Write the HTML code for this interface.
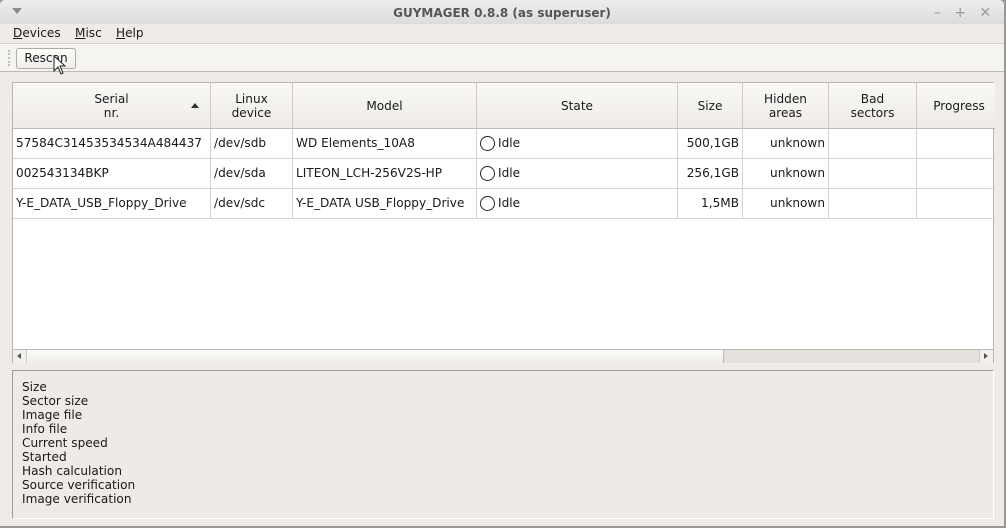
<!DOCTYPE html>
<html><head><meta charset="utf-8"><style>
*{box-sizing:border-box;margin:0;padding:0}
body{width:1006px;height:528px;overflow:hidden;background:#9a9895;font-family:"DejaVu Sans","Liberation Sans",sans-serif;font-size:12.1px;color:#1a1a1a;position:relative}
.a{position:absolute}
.win{left:0;top:0;width:1004px;height:526px;background:#efebe7;border-radius:5px 5px 0 0;overflow:hidden}
.title{left:0;top:0;width:1004px;height:24px;background:linear-gradient(#eeeeee,#dcdcdc);text-align:center;line-height:26px;font-weight:bold;color:#555;font-size:12px}
.menu{top:24px;left:0;width:1004px;height:20px;background:#efebe7;border-bottom:1px solid #d8d4d0}
.tool{top:44px;left:0;width:1004px;height:28px;background:#f6f4f1;border-bottom:1px solid #bdb9b5}
.tbl{left:12px;top:82px;width:982px;height:281px;background:#fff;border:1px solid #b8b4b0}
.hd{top:0;height:46px;background:linear-gradient(#f9f8f6,#efece8);border-right:1px solid #cfcbc7;border-bottom:1px solid #bdb9b5;text-align:center;display:flex;align-items:center;justify-content:center;line-height:14px}
.c{height:30px;border-right:1px solid #d6d3cf;border-bottom:1px solid #d6d3cf;line-height:28px;padding:0 3px;white-space:nowrap;overflow:hidden}
.r{text-align:right}
.info{left:12px;top:370px;width:982px;height:149px;border-top:1px solid #a09c98;border-left:1px solid #a09c98;border-right:1px solid #fff;border-bottom:1px solid #fff;background:#eeebe7;padding:9px 0 0 9px;line-height:14px}
.circ{display:inline-block;width:15px;height:15px;border:1px solid #222;border-radius:50%;vertical-align:-4px;margin-right:3px}
</style></head><body>
<div class="a win">
<div class="a title">GUYMAGER 0.8.8 (as superuser)</div>
<div class="a" style="left:12px;top:8px;width:0;height:0;border-left:5px solid transparent;border-right:5px solid transparent;border-top:6px solid #8a8a8a"></div>
<div class="a" style="left:934px;top:2px;color:#999;font-size:14px;line-height:22px">–&nbsp;&nbsp;&nbsp;+&nbsp;&nbsp;&nbsp;✕</div>
<div class="a menu"><span class="a" style="left:13px;top:2px"><u>D</u>evices</span><span class="a" style="left:75px;top:2px"><u>M</u>isc</span><span class="a" style="left:116px;top:2px"><u>H</u>elp</span></div>
<div class="a tool">
<div class="a" style="left:8px;top:6px;width:2px;height:16px;border-left:2px dotted #c0bcb8"></div>
<div class="a" style="left:16px;top:4px;width:60px;height:21px;border:1px solid #b0aca8;border-radius:3px;background:linear-gradient(#fdfdfc,#f0eeeb);text-align:center;line-height:19px">Rescan</div>
<svg class="a" style="left:53px;top:11px" width="14" height="22"><path d="M1 1 L1 16 L5 12 L8 19 L10 18 L7 11 L12 11 Z" fill="#fff" stroke="#222" stroke-width="1"/></svg>
</div>
<div class="a tbl">
<div class="a hd" style="left:0;width:198px">Serial<br>nr.</div>
<div class="a" style="left:178px;top:20px;border-left:4px solid transparent;border-right:4px solid transparent;border-bottom:5px solid #333"></div>
<div class="a hd" style="left:198px;width:82px">Linux<br>device</div>
<div class="a hd" style="left:280px;width:184px">Model</div>
<div class="a hd" style="left:464px;width:201px">State</div>
<div class="a hd" style="left:665px;width:65px">Size</div>
<div class="a hd" style="left:730px;width:86px">Hidden<br>areas</div>
<div class="a hd" style="left:816px;width:88px">Bad<br>sectors</div>
<div class="a hd" style="left:904px;width:78px;border-right:none;padding-left:6px">Progress</div>

<div class="a" style="top:46px;left:0">
<div class="a c" style="left:0;width:198px">57584C31453534534A484437</div>
<div class="a c" style="left:198px;width:82px">/dev/sdb</div>
<div class="a c" style="left:280px;width:184px">WD Elements_10A8</div>
<div class="a c" style="left:464px;width:201px"><span class="circ"></span>Idle</div>
<div class="a c r" style="left:665px;width:65px">500,1GB</div>
<div class="a c r" style="left:730px;width:86px">unknown</div>
<div class="a c" style="left:816px;width:88px"></div>
<div class="a c" style="left:904px;width:78px;border-right:none"></div>
</div>
<div class="a" style="top:76px;left:0">
<div class="a c" style="left:0;width:198px">002543134BKP</div>
<div class="a c" style="left:198px;width:82px">/dev/sda</div>
<div class="a c" style="left:280px;width:184px">LITEON_LCH-256V2S-HP</div>
<div class="a c" style="left:464px;width:201px"><span class="circ"></span>Idle</div>
<div class="a c r" style="left:665px;width:65px">256,1GB</div>
<div class="a c r" style="left:730px;width:86px">unknown</div>
<div class="a c" style="left:816px;width:88px"></div>
<div class="a c" style="left:904px;width:78px;border-right:none"></div>
</div>
<div class="a" style="top:106px;left:0">
<div class="a c" style="left:0;width:198px">Y-E_DATA_USB_Floppy_Drive</div>
<div class="a c" style="left:198px;width:82px">/dev/sdc</div>
<div class="a c" style="left:280px;width:184px">Y-E_DATA USB_Floppy_Drive</div>
<div class="a c" style="left:464px;width:201px"><span class="circ"></span>Idle</div>
<div class="a c r" style="left:665px;width:65px">1,5MB</div>
<div class="a c r" style="left:730px;width:86px">unknown</div>
<div class="a c" style="left:816px;width:88px"></div>
<div class="a c" style="left:904px;width:78px;border-right:none"></div>
</div>
<div class="a" style="left:0;top:266px;width:980px;height:14px;border-top:1px solid #bdb9b5;background:#e4e0dc"></div>
<div class="a" style="left:0;top:266px;width:14px;height:14px;border-top:1px solid #bdb9b5;border-right:1px solid #cfcbc7;background:#f2f0ed"></div>
<div class="a" style="left:4px;top:270px;border-top:3px solid transparent;border-bottom:3px solid transparent;border-right:4px solid #555"></div>
<div class="a" style="left:14px;top:266px;width:697px;height:14px;border-top:1px solid #bdb9b5;border-right:1px solid #bdb9b5;background:linear-gradient(#fbfbfa,#efedea)"></div>
<div class="a" style="left:966px;top:266px;width:14px;height:14px;border-top:1px solid #bdb9b5;border-left:1px solid #cfcbc7;background:#f2f0ed"></div>
<div class="a" style="left:971px;top:270px;border-top:3px solid transparent;border-bottom:3px solid transparent;border-left:4px solid #555"></div>
</div>
<div class="a info">Size<br>Sector size<br>Image file<br>Info file<br>Current speed<br>Started<br>Hash calculation<br>Source verification<br>Image verification</div>
</div>
</body></html>
